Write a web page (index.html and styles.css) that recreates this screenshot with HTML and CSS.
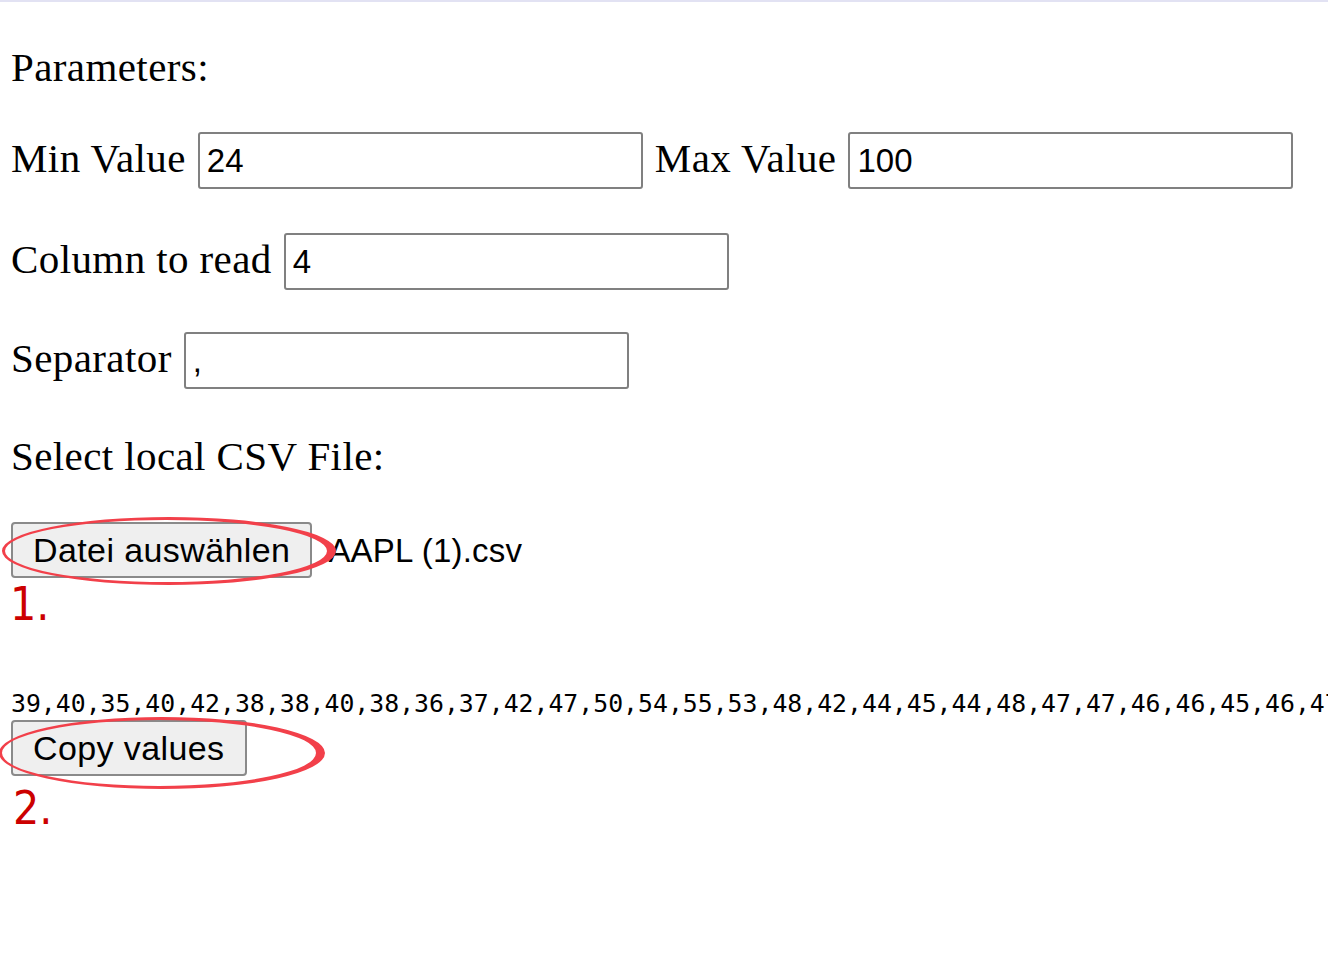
FILE: index.html
```html
<!DOCTYPE html>
<html lang="de">
<head>
<meta charset="utf-8">
<title>CSV Parameters</title>
<link rel="stylesheet" href="styles.css">
</head>
<body>
<div class="topline"></div>
<main class="page">
  <p class="heading">Parameters:</p>
  <div class="field-row row-1">
    <label class="label">Min Value</label>
    <input class="text-input" type="text" value="24">
    <label class="label">Max Value</label>
    <input class="text-input" type="text" value="100">
  </div>
  <div class="field-row row-2">
    <label class="label">Column to read</label>
    <input class="text-input" type="text" value="4">
  </div>
  <div class="field-row row-3">
    <label class="label">Separator</label>
    <input class="text-input" type="text" value=",">
  </div>
  <p class="heading select-heading">Select local CSV File:</p>
  <div class="file-row">
    <button class="btn" type="button">Datei auswählen</button>
    <span class="file-name">AAPL (1).csv</span>
  </div>
  <div class="data-line">39,40,35,40,42,38,38,40,38,36,37,42,47,50,54,55,53,48,42,44,45,44,48,47,47,46,46,45,46,47,48,49,50,51,52,50,49,48</div>
  <button class="btn copy-btn" type="button">Copy values</button>
</main>

<svg class="annotations" width="1328" height="962" viewBox="0 0 1328 962" aria-hidden="true">
  <path class="ring" fill-rule="evenodd" d="M2,551 a167,34 0 1,0 334,0 a167,34 0 1,0 -334,0 Z M5,551 a161,31 0 1,0 322,0 a161,31 0 1,0 -322,0 Z"/>
  <path class="ring" fill-rule="evenodd" d="M-1,753 a163,36 0 1,0 326,0 a163,36 0 1,0 -326,0 Z M2,753 a157,33 0 1,0 314,0 a157,33 0 1,0 -314,0 Z"/>
</svg>
<div class="step step-1">1.</div>
<div class="step step-2">2.</div>
</body>
</html>
```

FILE: styles.css
```css
html, body {
  margin: 0;
  padding: 0;
  width: 1328px;
  height: 962px;
  overflow: hidden;
  background: #ffffff;
}

body {
  position: relative;
  font-family: "Liberation Serif", "Times New Roman", serif;
  font-size: 41px;
  letter-spacing: 0.4px;
  color: #000000;
}

.topline {
  height: 2px;
  background: #e2e2f3;
}

.page {
  padding-left: 11px;
  display: flex;
  flex-direction: column;
  align-items: flex-start;
}

.heading {
  margin: 42px 0 0;
  line-height: 46px;
}

.select-heading {
  margin-top: 44px;
}

.field-row {
  display: flex;
  align-items: baseline;
  gap: 12px;
  margin-top: 42px;
}

.row-2 {
  margin-top: 44px;
}

.row-3 {
  margin-top: 42px;
}

.label {
  line-height: 46px;
  white-space: nowrap;
}

.text-input {
  box-sizing: border-box;
  width: 445px;
  height: 57px;
  margin: 0;
  padding: 0 7px;
  border: 2px solid #808080;
  border-radius: 3px;
  background: #ffffff;
  font-family: "Liberation Sans", Arial, sans-serif;
  font-size: 33px;
  letter-spacing: 0;
  color: #000000;
}

.file-row {
  display: flex;
  align-items: baseline;
  margin-top: 43px;
}

.btn {
  box-sizing: border-box;
  height: 56px;
  margin: 0;
  padding: 0 20px;
  border: 2px solid #8a8a8a;
  border-radius: 4px;
  background: #efefef;
  font-family: "Liberation Sans", Arial, sans-serif;
  font-size: 34px;
  letter-spacing: 0.4px;
  color: #000000;
  white-space: nowrap;
}

.file-name {
  margin-left: 16px;
  font-family: "Liberation Sans", Arial, sans-serif;
  font-size: 33px;
  letter-spacing: 0.2px;
}

.data-line {
  margin-top: 112px;
  width: 1317px;
  overflow: hidden;
  white-space: nowrap;
  font-family: "DejaVu Sans Mono", "Liberation Mono", monospace;
  font-size: 24.8px;
  letter-spacing: 0;
  line-height: 28px;
}

.copy-btn {
  margin-top: 2px;
}

.annotations {
  position: absolute;
  left: 0;
  top: 0;
  pointer-events: none;
}

.ring {
  fill: #f2404a;
}

.step {
  position: absolute;
  font-family: "DejaVu Sans Condensed", "DejaVu Sans", sans-serif;
  font-size: 46px;
  line-height: 46px;
  letter-spacing: 0;
  color: #cc0000;
}

.step-1 {
  left: 10px;
  top: 581px;
}

.step-2 {
  left: 13px;
  top: 785px;
}
```
